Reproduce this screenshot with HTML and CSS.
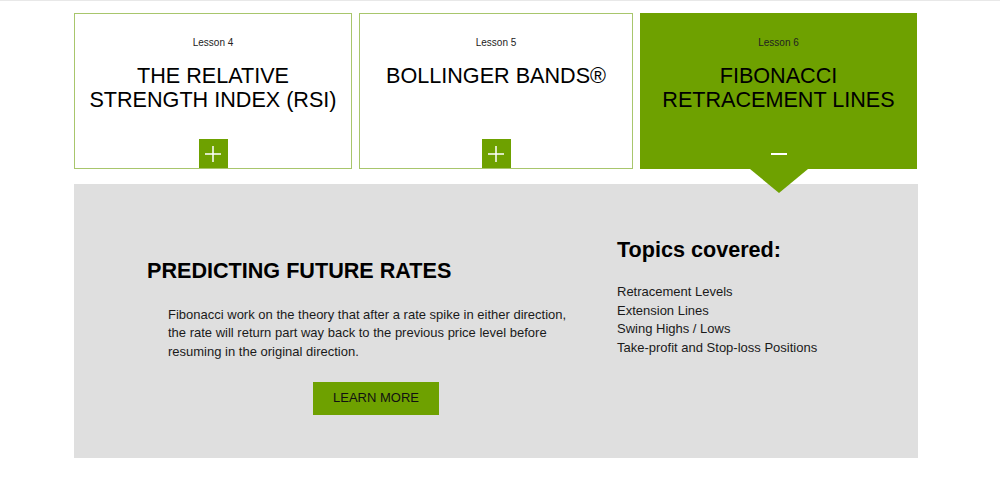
FILE: index.html
```html
<!DOCTYPE html>
<html lang="en">
<head>
    <meta charset="UTF-8">
    <meta name="viewport" content="width=device-width, initial-scale=1.0">
    <title>Technical Analysis Lessons</title>
    <link rel="stylesheet" href="styles.css">
</head>
<body>
    <div class="lessons">
        <div class="cards">
            <div class="card">
                <p class="card-lesson">Lesson 4</p>
                <h3 class="card-title">THE RELATIVE STRENGTH INDEX (RSI)</h3>
                <button class="card-toggle" aria-label="Open lesson 4">
                    <svg width="16" height="16" viewBox="0 0 16 16"><path d="M8 0v16M0 8h16" stroke="#fff" stroke-width="1.5"/></svg>
                </button>
            </div>
            <div class="card">
                <p class="card-lesson">Lesson 5</p>
                <h3 class="card-title">BOLLINGER BANDS&reg;</h3>
                <button class="card-toggle" aria-label="Open lesson 5">
                    <svg width="16" height="16" viewBox="0 0 16 16"><path d="M8 0v16M0 8h16" stroke="#fff" stroke-width="1.5"/></svg>
                </button>
            </div>
            <div class="card is-open">
                <p class="card-lesson">Lesson 6</p>
                <h3 class="card-title">FIBONACCI RETRACEMENT LINES</h3>
                <button class="card-toggle" aria-label="Close lesson 6">
                    <svg width="16" height="16" viewBox="0 0 16 16"><path d="M0 8h16" stroke="#fff" stroke-width="2"/></svg>
                </button>
            </div>
        </div>

        <div class="panel">
            <div class="panel-main">
                <h2 class="panel-title">PREDICTING FUTURE RATES</h2>
                <div class="panel-body">
                    <p>Fibonacci work on the theory that after a rate spike in either direction, the rate will return part way back to the previous price level before resuming in the original direction.</p>
                    <a href="#" class="learn-more">LEARN MORE</a>
                </div>
            </div>
            <div class="panel-side">
                <h2 class="topics-title">Topics covered:</h2>
                <ul class="topics">
                    <li>Retracement Levels</li>
                    <li>Extension Lines</li>
                    <li>Swing Highs / Lows</li>
                    <li>Take-profit and Stop-loss Positions</li>
                </ul>
            </div>
        </div>
    </div>
</body>
</html>
```

FILE: styles.css
```css
body {
    margin: 0;
    border-top: 1px solid #e8e8e8;
    font-family: "Liberation Sans", Arial, sans-serif;
    background-color: #fff;
    color: #111;
}
.lessons {
    width: 844px;
    margin-left: 74px;
    padding-top: 12px;
}
.cards {
    display: grid;
    grid-template-columns: 278px 274px 277px;
    column-gap: 7px;
}
.card {
    position: relative;
    box-sizing: border-box;
    height: 156px;
    border: 1px solid #a8c66c;
    display: flex;
    flex-direction: column;
    align-items: center;
    text-align: center;
    padding: 22px 10px 0;
}
.card.is-open {
    background-color: #6ea100;
    border-color: #6ea100;
}
.card.is-open::after {
    content: "";
    position: absolute;
    left: 50%;
    bottom: -25px;
    margin-left: -29px;
    border-left: 29px solid transparent;
    border-right: 29px solid transparent;
    border-top: 24px solid #6ea100;
    z-index: 2;
}
.card-lesson {
    margin: 0;
    font-size: 10px;
    line-height: 14px;
    color: #222;
}
.card-title {
    margin: 14px 0 0;
    font-size: 21.6px;
    font-weight: normal;
    line-height: 24px;
    color: #000;
}
.card-toggle {
    margin-top: auto;
    width: 29px;
    height: 29px;
    border: none;
    padding: 0;
    background-color: #6ea100;
    display: flex;
    align-items: center;
    justify-content: center;
    cursor: pointer;
}
.panel {
    margin-top: 15px;
    background-color: #dfdfdf;
    display: grid;
    grid-template-columns: 470px 1fr;
    align-items: start;
    padding: 53px 0 43px 73px;
}
.panel-main {
    padding-top: 21px;
}
.panel-title,
.topics-title {
    margin: 0;
    font-size: 21.6px;
    font-weight: bold;
    line-height: 25px;
    color: #000;
}
.panel-body {
    width: 416px;
    margin: 23px 0 0 21px;
    text-align: center;
}
.panel-body p {
    margin: 0 0 21px;
    text-align: left;
    font-size: 13px;
    line-height: 18.4px;
    color: #1a1a1a;
}
.learn-more {
    display: inline-block;
    background-color: #6ea100;
    color: #111;
    text-decoration: none;
    font-size: 13px;
    line-height: 17px;
    padding: 7px 20px 9px;
}
.topics {
    list-style: none;
    margin: 21px 0 0;
    padding: 0;
    font-size: 13px;
    line-height: 18.5px;
    color: #1a1a1a;
}
```
